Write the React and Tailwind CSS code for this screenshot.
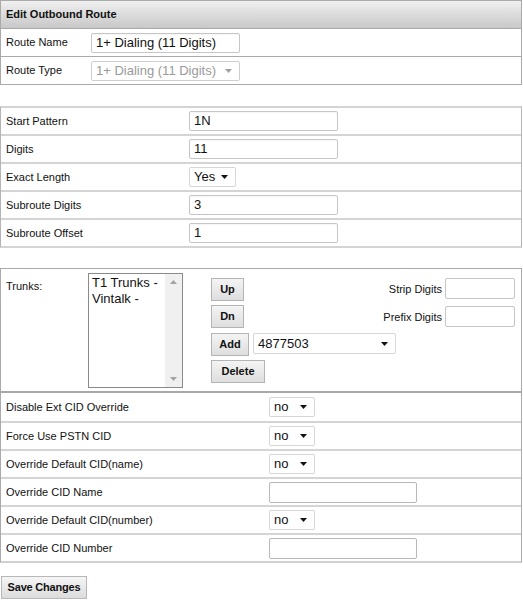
import React from "react";

const font = "font-['Liberation_Sans',Arial,sans-serif]";

function Arrow({ gray }) {
  return (
    <svg width="7" height="4" viewBox="0 0 7 4" className="shrink-0">
      <path d="M0 0H7L3.5 4Z" fill={gray ? "#a0a0a0" : "#111"} />
    </svg>
  );
}

function TextBox({ value, className }) {
  return (
    <div
      className={`h-[20px] border border-[#c6c6c6] rounded-[2px] bg-white pl-[4px] flex items-center text-[13px] text-[#111] shadow-[inset_0_1px_1px_rgba(0,0,0,0.04)] ${className}`}
    >
      {value}
    </div>
  );
}

function Select({ value, className, disabled }) {
  return (
    <div
      className={`h-[20px] border rounded-[2px] bg-white pl-[4px] pr-[7px] flex items-center justify-between text-[13px] ${
        disabled ? "border-[#cfcfcf] text-[#9a9a9a]" : "border-[#d6d6d6] text-[#111]"
      } ${className}`}
    >
      <span>{value}</span>
      <Arrow gray={disabled} />
    </div>
  );
}

function Btn({ children, className }) {
  return (
    <div
      className={`h-[23px] border border-[#b4b4b4] bg-gradient-to-b from-[#f4f4f4] to-[#dedede] flex items-center justify-center text-[11px] font-bold text-[#111] ${className}`}
    >
      {children}
    </div>
  );
}

function Row2({ label, children, first }) {
  return (
    <div className={`flex items-center ${first ? "h-[26px]" : "h-[28px] border-t-2 border-[#d4d4d4]"}`}>
      <div className="w-[188px] pl-[5px] text-[11px] text-[#111]">{label}</div>
      {children}
    </div>
  );
}

function Row3({ label, children, first }) {
  return (
    <div className={`flex items-center ${first ? "h-[28px]" : "h-[28px] border-t-2 border-[#d4d4d4]"}`}>
      <div className="w-[268px] pl-[5px] text-[11px] text-[#111]">{label}</div>
      {children}
    </div>
  );
}

export default function App() {
  return (
    <div className={`w-[523px] h-[600px] bg-white ${font} text-[#111]`}>
      {/* Section 1 */}
      <div className="w-[522px] border border-[#aaaaaa]">
        <div className="h-[28px] border-b border-[#aaaaaa] bg-gradient-to-b from-[#f0f0f0] to-[#c8c8c8] flex items-center pl-[5px] text-[11px] font-bold">
          Edit Outbound Route
        </div>
        <div className="h-[28px] border-b border-[#aaaaaa] flex items-center">
          <div className="w-[90px] pl-[5px] text-[11px]">Route Name</div>
          <TextBox value="1+ Dialing (11 Digits)" className="w-[149px]" />
        </div>
        <div className="h-[27px] flex items-center">
          <div className="w-[90px] pl-[5px] text-[11px]">Route Type</div>
          <Select value="1+ Dialing (11 Digits)" className="w-[149px] h-[19px]" disabled />
        </div>
      </div>

      {/* Section 2 */}
      <div className="mt-[21px] w-[522px] border border-[#b4b4b4] border-t-2 border-t-[#d4d4d4] border-b-2 border-b-[#d4d4d4]">
        <Row2 label="Start Pattern" first>
          <TextBox value="1N" className="w-[149px]" />
        </Row2>
        <Row2 label="Digits">
          <TextBox value="11" className="w-[149px]" />
        </Row2>
        <Row2 label="Exact Length">
          <Select value="Yes" className="w-[47px] h-[19px]" />
        </Row2>
        <Row2 label="Subroute Digits">
          <TextBox value="3" className="w-[149px]" />
        </Row2>
        <Row2 label="Subroute Offset">
          <TextBox value="1" className="w-[149px]" />
        </Row2>
      </div>

      {/* Section 3 */}
      <div className="mt-[20px] w-[522px] border border-[#aaaaaa] border-b-2 border-b-[#d0d0d0]">
        <div className="h-[122px] flex items-start">
          <div className="w-[87px] pl-[5px] pt-[9px] text-[11px]">Trunks:</div>
          <div className="mt-[4px] w-[95px] h-[115px] border border-[#8a8a8a] bg-white flex">
            <div className="flex-1 pl-[3px] pt-[1px] text-[13px] leading-[16px] text-[#111]">
              <div>T1 Trunks -</div>
              <div>Vintalk -</div>
            </div>
            <div className="w-[17px] bg-[#f0f0f0] flex flex-col items-center justify-between py-[6px]">
              <svg width="7" height="4" viewBox="0 0 7 4">
                <path d="M0 4H7L3.5 0Z" fill="#a3a3a3" />
              </svg>
              <svg width="7" height="4" viewBox="0 0 7 4">
                <path d="M0 0H7L3.5 4Z" fill="#a3a3a3" />
              </svg>
            </div>
          </div>
          <div className="flex-1 pl-[28px] pr-[6px] pt-[9px] flex flex-col">
            <div className="flex items-start">
              <Btn className="w-[33px]">Up</Btn>
              <div className="flex-1" />
              <div className="text-[11px] mt-[3px] mr-[3px]">Strip Digits</div>
              <div className="w-[70px] h-[21px] border border-[#c6c6c6] rounded-[2px] bg-white" />
            </div>
            <div className="flex items-start mt-[4px]">
              <Btn className="w-[33px]">Dn</Btn>
              <div className="flex-1" />
              <div className="text-[11px] mt-[4px] mr-[3px]">Prefix Digits</div>
              <div className="mt-[1px] w-[70px] h-[21px] border border-[#c6c6c6] rounded-[2px] bg-white" />
            </div>
            <div className="flex items-start mt-[5px]">
              <Btn className="w-[38px]">Add</Btn>
              <Select value="4877503" className="ml-[4px] w-[143px] h-[21px]" />
            </div>
            <div className="flex items-start mt-[4px]">
              <Btn className="w-[54px]">Delete</Btn>
            </div>
          </div>
        </div>
        <div className="border-t-2 border-[#a8a8a8]">
          <Row3 label="Disable Ext CID Override" first>
            <Select value="no" className="w-[46px]" />
          </Row3>
          <Row3 label="Force Use PSTN CID">
            <Select value="no" className="w-[46px]" />
          </Row3>
          <Row3 label="Override Default CID(name)">
            <Select value="no" className="w-[46px]" />
          </Row3>
          <Row3 label="Override CID Name">
            <div className="w-[148px] h-[21px] border border-[#b8b8b8] rounded-[2px] bg-white" />
          </Row3>
          <Row3 label="Override Default CID(number)">
            <Select value="no" className="w-[46px]" />
          </Row3>
          <Row3 label="Override CID Number">
            <div className="w-[148px] h-[21px] border border-[#b8b8b8] rounded-[2px] bg-white" />
          </Row3>
        </div>
      </div>

      <div className="mt-[13px] ml-[1px] w-[86px] h-[23px] border border-[#b8b8b8] bg-gradient-to-b from-[#f5f5f5] to-[#dcdcdc] flex items-center justify-center text-[11px] font-bold tracking-[-0.2px] text-[#111]">
        Save Changes
      </div>
    </div>
  );
}
